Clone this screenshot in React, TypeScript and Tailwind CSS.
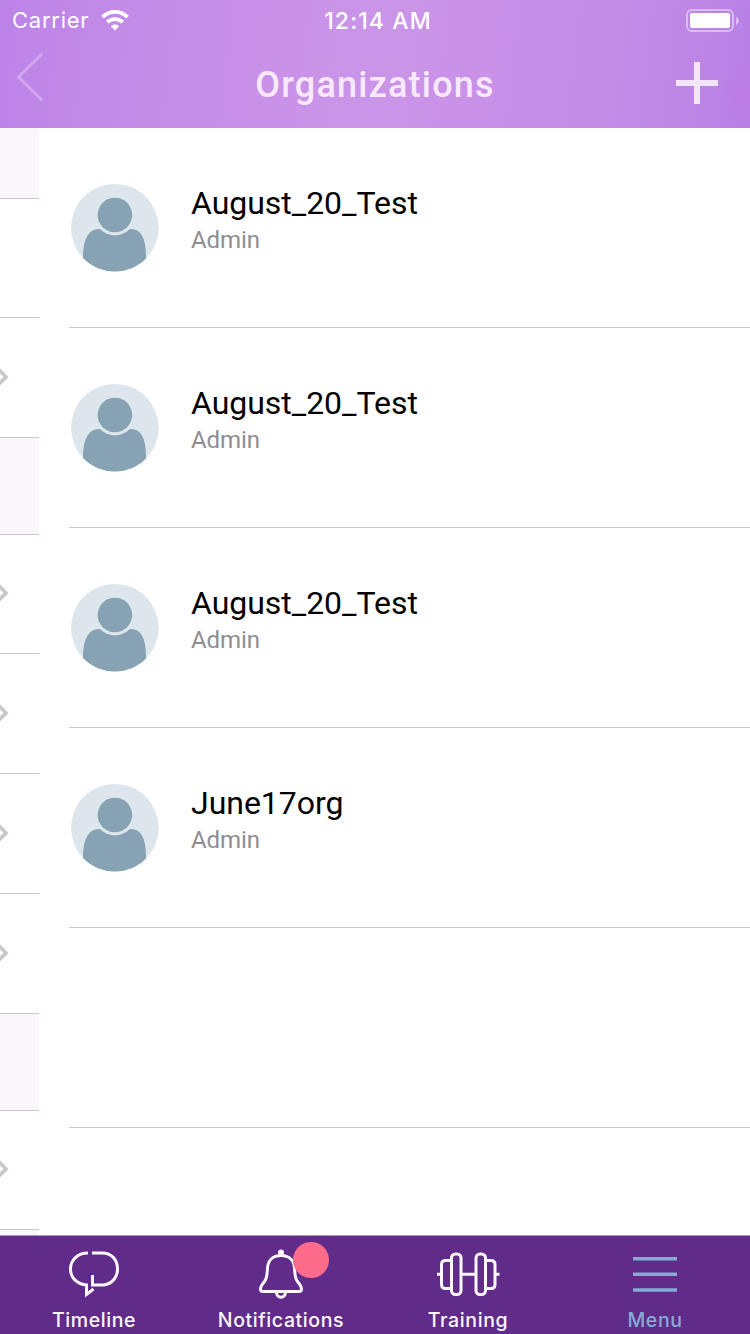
import type { ReactNode } from "react";

const organizations = [
  { name: "August_20_Test", role: "Admin" },
  { name: "August_20_Test", role: "Admin" },
  { name: "August_20_Test", role: "Admin" },
  { name: "June17org", role: "Admin" },
];

const menuRows = [
  { size: "h-[71px]", header: true, chevron: false },
  { size: "h-[119px]", header: false, chevron: false },
  { size: "h-[120px]", header: false, chevron: true },
  { size: "h-[97px]", header: true, chevron: false },
  { size: "h-[119px]", header: false, chevron: true },
  { size: "h-[120px]", header: false, chevron: true },
  { size: "h-[120px]", header: false, chevron: true },
  { size: "h-[120px]", header: false, chevron: true },
  { size: "h-[97px]", header: true, chevron: false },
  { size: "h-[119px]", header: false, chevron: true },
];

function Header() {
  return (
    <header className="h-32 shrink-0 bg-[radial-gradient(circle_at_100%_75%,#c07ae299_0%,transparent_30px),linear-gradient(97deg,#bd82e7_0%,#c38ce8_18%,#c991e8_35%,#ca95e8_50%,#c991e8_64%,#c38de7_80%,#b880e5_100%)] text-white">
      <div className="grid h-10 grid-cols-3 items-center font-['Inter',sans-serif] text-[22px]">
        <div className="flex items-center gap-[12px] pl-[12px]">
          <span className="pt-px tracking-[0.75px]">Carrier</span>
          <svg width="28" height="21" viewBox="0 0 28 21" fill="none" stroke="white" strokeWidth="3.8">
            <path d="M1.5 7.2C8.4 .2 19.6 .2 26.5 7.2" />
            <path d="M6.3 12.2C10.6 8 17.4 8 21.7 12.2" />
            <path d="M14 20.5L9.9 16.2C12.3 14 15.7 14 18.1 16.2Z" fill="white" stroke="none" />
          </svg>
        </div>
        <span className="pl-[6px] pt-[3px] text-center text-[23px] font-medium tracking-[1.1px]">12:14 AM</span>
        <svg className="mr-[10px] justify-self-end" width="54" height="24" viewBox="0 0 54 24" fill="none">
          <rect x="1" y="2" width="46" height="21" rx="5" stroke="white" strokeOpacity=".45" strokeWidth="2" />
          <rect x="4" y="5" width="40" height="15" rx="2" fill="white" />
          <path d="M50 9C53.7 10 53.7 16 50 17Z" fill="white" fillOpacity=".5" />
        </svg>
      </div>
      <div className="flex h-[88px] items-start justify-between pl-4 pr-8">
        <svg className="mt-3" width="42" height="50" viewBox="0 0 42 50" fill="none">
          <path d="M26.3 1.5L2.5 25L26.3 48.5" stroke="white" strokeOpacity=".27" strokeWidth="3" />
        </svg>
        <h1 className="mt-[24px] pl-[16px] font-['Roboto',sans-serif] text-[36px] leading-[42px] font-medium tracking-[1.2px] text-[#f8e8fc]">
          Organizations
        </h1>
        <svg className="mt-[22px]" width="42" height="42" viewBox="0 0 42 42">
          <path d="M18 0h6v18h18v6H24v18h-6V24H0v-6h18z" fill="#f3e5fa" />
        </svg>
      </div>
    </header>
  );
}

function MenuEdge() {
  return (
    <aside className="flex h-full w-[39px] shrink-0 flex-col bg-[#f9f7fa]">
      {menuRows.map((row, i) => (
        <div
          key={i}
          className={`flex shrink-0 items-center border-b border-[#c8c7cc] ${row.size} ${row.header ? "bg-[#f9f7fa]" : "bg-white"}`}
        >
          {row.chevron && (
            <svg className="mb-[2px]" width="10" height="18" viewBox="0 0 10 18" fill="none">
              <path d="M-1 2L6 9L-1 16" stroke="#c7c7cc" strokeWidth="3.6" />
            </svg>
          )}
        </div>
      ))}
    </aside>
  );
}

function Avatar({ id }: { id: string }) {
  return (
    <svg width="88" height="88" viewBox="0 0 88 88">
      <clipPath id={id}>
        <circle cx="43.8" cy="43.8" r="43.8" />
      </clipPath>
      <g clipPath={`url(#${id})`}>
        <rect width="88" height="88" fill="#dce6ec" />
        <path d="M12 88V71C12.5 54 18 45 28 45H60C70 45 74.5 54 75 71V88Z" fill="#87a3b3" />
        <circle cx="43.9" cy="31" r="20.4" fill="#dce6ec" />
        <circle cx="43.9" cy="31" r="17.3" fill="#87a3b3" />
      </g>
    </svg>
  );
}

function Tab({ label, active, children }: { label: string; active?: boolean; children: ReactNode }) {
  return (
    <div className={`flex w-[187px] flex-col items-center pt-[6px] ${active ? "text-[#86acd6]" : "text-[#fdf8ff]"}`}>
      <div className="relative h-[60px] w-[75px]">{children}</div>
      <span className="mt-[5px] pl-[1px] font-['Inter',sans-serif] text-[19.5px] leading-[26px] font-[450] tracking-[0.6px]">
        {label}
      </span>
    </div>
  );
}

function TabIcon({ children }: { children: ReactNode }) {
  return (
    <svg width="75" height="60" viewBox="0 0 75 60" fill="none" stroke="currentColor" strokeWidth="3">
      {children}
    </svg>
  );
}

function TabBar() {
  return (
    <nav className="flex h-[99px] shrink-0 border-t border-[#a899b8] bg-[#612b89]">
      <Tab label="Timeline">
        <TabIcon>
          <path d="M32 11C21 11 14.5 18.5 14.5 27C14.5 36 21.5 42.5 30.5 43V52.5L37.5 47" />
          <path d="M36 11H46C56 11 61.5 18 61.5 27S55 43 46 43H36.5V33" />
        </TabIcon>
      </Tab>
      <Tab label="Notifications">
        <TabIcon>
          <circle cx="38" cy="10.5" r="3" fill="currentColor" stroke="none" />
          <path d="M38 13.5C29.5 13.5 25 19 24.5 26C24.2 32 24.2 36 21.5 39.5C19 42.5 17.5 44.5 17.5 47C17.5 48.8 18.5 49.5 20 49.5H56C57.5 49.5 58.5 48.8 58.5 47C58.5 44.5 57 42.5 54.5 39.5C51.8 36 51.8 32 51.5 26C51 19 46.5 13.5 38 13.5Z" />
          <path d="M33.5 50C33.5 57 42.5 57 42.5 50" />
        </TabIcon>
        <span className="absolute left-[50px] top-0 size-9 rounded-full bg-[#ff6b8b]" />
      </Tab>
      <Tab label="Training">
        <TabIcon>
          <rect x="21.5" y="12" width="9.5" height="40.5" rx="4" />
          <rect x="46" y="12" width="9.5" height="40.5" rx="4" />
          <path d="M21.5 18.5H15.5Q11.5 18.5 11.5 22.5V42.5Q11.5 46.5 15.5 46.5H21.5" />
          <path d="M55.5 18.5H61Q65 18.5 65 22.5V42.5Q65 46.5 61 46.5H55.5" />
          <path d="M7 32.3H11M31 32.3H46M65 32.3H69.5" />
        </TabIcon>
      </Tab>
      <Tab label="Menu" active>
        <TabIcon>
          <path d="M16 16.8H60M16 32.3H60M16 48H60" strokeWidth="3.6" />
        </TabIcon>
      </Tab>
    </nav>
  );
}

export default function App() {
  return (
    <div className="flex h-[1334px] w-[750px] flex-col overflow-hidden bg-white">
      <Header />
      <div className="flex h-[1107px] shrink-0 overflow-hidden">
        <MenuEdge />
        <main className="ml-[30px] flex-1 font-['Roboto',sans-serif]">
          {organizations.map((org, i) => (
            <div key={i} className="flex h-[200px] items-center border-b border-[#c8c7cc] pl-[2px]">
              <Avatar id={`avatar-${i}`} />
              <div className="-mt-[17px] ml-8">
                <div className="text-[32px] leading-[40px] tracking-[-0.03px] text-black">{org.name}</div>
                <div className="pt-px text-[24px] leading-[32px] tracking-[-0.05px] text-[#8e8e93]">{org.role}</div>
              </div>
            </div>
          ))}
          <div className="h-[200px] border-b border-[#c8c7cc]" />
        </main>
      </div>
      <TabBar />
    </div>
  );
}
